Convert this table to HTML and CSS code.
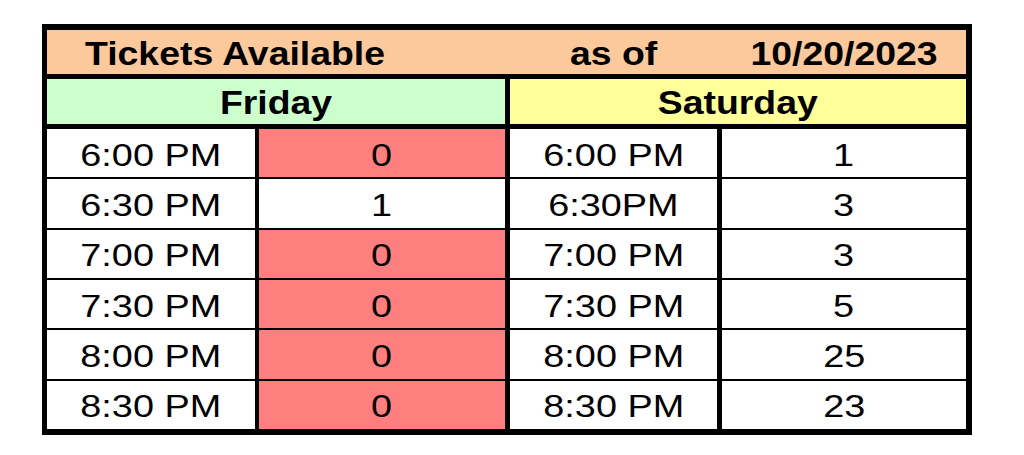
FILE: index.html
```html
<!DOCTYPE html>
<html>
<head>
<meta charset="utf-8">
<link rel="stylesheet" href="styles.css">
</head>
<body>
<div class="sheet">
  <div class="title-row">
    <div class="title-cell title-left"><span class="tb left">Tickets Available</span></div>
    <div class="title-cell"><span class="tb">as of</span></div>
    <div class="title-cell"><span class="tb">10/20/2023</span></div>
  </div>
  <div class="day-row">
    <div class="day fri"><span class="tb">Friday</span></div>
    <div class="day sat"><span class="tb">Saturday</span></div>
  </div>
  <div class="body">
    <div class="row">
      <div class="c"><span class="t">6:00 PM</span></div>
      <div class="c n red"><span class="t">0</span></div>
      <div class="c s"><span class="t">6:00 PM</span></div>
      <div class="c s"><span class="t">1</span></div>
    </div>
    <div class="row">
      <div class="c"><span class="t">6:30 PM</span></div>
      <div class="c n"><span class="t">1</span></div>
      <div class="c s"><span class="t">6:30PM</span></div>
      <div class="c s"><span class="t">3</span></div>
    </div>
    <div class="row">
      <div class="c"><span class="t">7:00 PM</span></div>
      <div class="c n red"><span class="t">0</span></div>
      <div class="c s"><span class="t">7:00 PM</span></div>
      <div class="c s"><span class="t">3</span></div>
    </div>
    <div class="row">
      <div class="c"><span class="t">7:30 PM</span></div>
      <div class="c n red"><span class="t">0</span></div>
      <div class="c s"><span class="t">7:30 PM</span></div>
      <div class="c s"><span class="t">5</span></div>
    </div>
    <div class="row">
      <div class="c"><span class="t">8:00 PM</span></div>
      <div class="c n red"><span class="t">0</span></div>
      <div class="c s"><span class="t">8:00 PM</span></div>
      <div class="c s"><span class="t">25</span></div>
    </div>
    <div class="row">
      <div class="c"><span class="t">8:30 PM</span></div>
      <div class="c n red"><span class="t">0</span></div>
      <div class="c s"><span class="t">8:30 PM</span></div>
      <div class="c s"><span class="t">23</span></div>
    </div>
  </div>
</div>
</body>
</html>
```

FILE: styles.css
```css
html, body {
  margin: 0;
  padding: 0;
  background: #ffffff;
}

body {
  font-family: "Liberation Sans", Arial, sans-serif;
  color: #000;
  width: 1024px;
  height: 455px;
  overflow: hidden;
}

.sheet {
  margin-left: 42px;
  margin-top: 24px;
  width: 919px;
  background: #000;
  border-style: solid;
  border-color: #000;
  border-width: 6px 6px 6px 5px;
  display: flex;
  flex-direction: column;
  gap: 5px;
}

.tb {
  display: inline-block;
  font-weight: bold;
  font-size: 34px;
  line-height: 1;
  transform: scaleX(1.1);
}

.tb.left {
  transform-origin: left center;
}

.t {
  display: inline-block;
  font-size: 31px;
  line-height: 1;
  transform: scaleX(1.22);
}

.title-row {
  height: 44px;
  background: #fbc99c;
  display: grid;
  grid-template-columns: 458px 217px 244px;
}

.title-cell {
  display: flex;
  align-items: center;
  justify-content: center;
  padding-top: 1px;
}

.title-left {
  justify-content: flex-start;
  padding-left: 38px;
}

.day-row {
  height: 45px;
  display: grid;
  grid-template-columns: 458px 461px;
}

.day {
  display: flex;
  align-items: center;
  justify-content: center;
  padding-top: 1px;
}

.fri {
  background: #ccffcc;
}

.sat {
  background: #ffff99;
  margin-left: 5px;
}

.body {
  height: 300px;
  display: flex;
  flex-direction: column;
  gap: 2px;
}

.row {
  flex: 1;
  display: grid;
  grid-template-columns: 208px 250px 212px 249px;
}

.c {
  background: #fff;
  display: flex;
  align-items: center;
  justify-content: center;
  padding-top: 4px;
}

.n {
  margin-left: 4px;
}

.s {
  margin-left: 5px;
}

.red {
  background: #ff7f7f;
}
```
